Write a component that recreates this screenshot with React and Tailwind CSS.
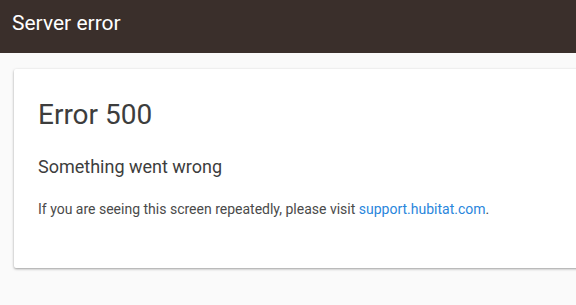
import React from 'react';

export default function App() {
    return (
        <div className="min-h-[305px] bg-[#fafafa] overflow-hidden" style={{ fontFamily: 'Roboto, "Noto Sans", sans-serif' }}>
            {/* Barre du haut */}
            <header className="h-[53px] bg-[#3a2f2b] px-3 pt-[10px]">
                <h1 className="text-[21px] leading-[26px] text-white">Server error</h1>
            </header>

            {/* Carte d'erreur */}
            <main className="pt-4 pl-[14px]">
                <div className="w-[600px] h-[199px] bg-white rounded-[2px] shadow-[0_1px_3px_rgba(0,0,0,0.25),0_1px_2px_rgba(0,0,0,0.15)] pl-6 pt-[28px]">
                    <h2 className="text-[28px] leading-[36px] text-[#3d3d3d]">Error 500</h2>
                    <p className="mt-[22px] text-[18px] leading-[24px] text-[#3d3d3d]">Something went wrong</p>
                    <p className="mt-[20px] text-[14px] leading-[20px] text-[#4a4a4a]">
                        If you are seeing this screen repeatedly, please visit{' '}
                        <a href="#" className="text-[#2a86dc]">support.hubitat.com</a>.
                    </p>
                </div>
            </main>
        </div>
    );
}
